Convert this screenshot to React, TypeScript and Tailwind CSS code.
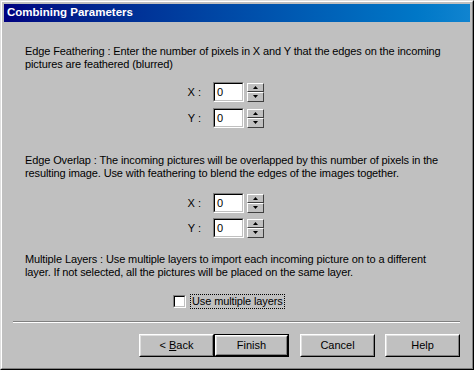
import React from "react"

const font = { fontFamily: '"Liberation Sans", Arial, sans-serif' }

function SpinField({ label }: { label: string }) {
  return (
    <div className="flex items-center h-[20px] ml-[162px]">
      <span className="w-[14px] text-right">{label}</span>
      <div className="ml-[12px] w-[31px] h-[20px] bg-white border border-t-[#808080] border-l-[#808080] border-b-white border-r-white">
        <div className="w-full h-full border border-t-black border-l-black border-b-[#c0c0c0] border-r-[#c0c0c0] pl-[2px] leading-[16px] text-black">
          0
        </div>
      </div>
      <div className="ml-[3px] flex flex-col w-[17px] h-[19px]">
        <SpinButton up />
        <SpinButton />
      </div>
    </div>
  )
}

function SpinButton({ up }: { up?: boolean }) {
  return (
    <div className="flex-1 flex items-center justify-center bg-[#c0c0c0] border border-t-white border-l-white border-b-[#404040] border-r-[#404040]">
      <svg width="5" height="3" viewBox="0 0 5 3">
        {up ? <path d="M2.5 0L5 3H0z" fill="#000" /> : <path d="M0 0H5L2.5 3z" fill="#000" />}
      </svg>
    </div>
  )
}

function Button({ children, isDefault }: { children: React.ReactNode; isDefault?: boolean }) {
  return (
    <div className={isDefault ? "w-[75px] h-[23px] border border-black" : "w-[75px] h-[23px]"}>
      <div className="w-full h-full border border-t-white border-l-white border-b-black border-r-black">
        <div className="w-full h-full flex items-center justify-center border border-t-[#dfdfdf] border-l-[#dfdfdf] border-b-[#808080] border-r-[#808080]">
          {children}
        </div>
      </div>
    </div>
  )
}

export default function App() {
  return (
    <div style={font} className="w-[474px] h-[370px] bg-[#c0c0c0] text-[11px] text-black border border-t-[#dfdfdf] border-l-[#dfdfdf] border-b-black border-r-black">
      <div className="w-full h-full border border-t-white border-l-white border-b-[#808080] border-r-[#808080] p-[2px] flex flex-col">
        {/* title bar */}
        <div className="h-[18px] bg-gradient-to-r from-[#000080] to-[#1084d0] flex items-center pl-[3px]">
          <span className="text-white font-bold text-[11.5px]">Combining Parameters</span>
        </div>

        <div className="flex flex-col pl-[21px] leading-[13px] tracking-[-0.12px]">
          <p className="mt-[23px]">
            Edge Feathering : Enter the number of pixels in X and Y that the edges on the incoming
            <br />
            pictures are feathered (blurred)
          </p>
          <div className="mt-[11px] flex flex-col gap-[6px] tracking-normal">
            <SpinField label="X :" />
            <SpinField label="Y :" />
          </div>

          <p className="mt-[26px]">
            Edge Overlap : The incoming pictures will be overlapped by this number of pixels in the
            <br />
            resulting image. Use with feathering to blend the edges of the images together.
          </p>
          <div className="mt-[13px] flex flex-col gap-[5px] tracking-normal">
            <SpinField label="X :" />
            <SpinField label="Y :" />
          </div>

          <p className="mt-[15px]">
            Multiple Layers : Use multiple layers to import each incoming picture on to a different
            <br />
            layer. If not selected, all the pictures will be placed on the same layer.
          </p>
          <div className="mt-[15px] ml-[148px] flex items-center">
            <div className="w-[13px] h-[13px] bg-white border border-t-[#808080] border-l-[#808080] border-b-white border-r-white">
              <div className="w-full h-full border border-t-black border-l-black border-b-[#c0c0c0] border-r-[#c0c0c0]" />
            </div>
            <span className="ml-[4px] px-[1px] border border-dotted border-black leading-[13px]">Use multiple layers</span>
          </div>
        </div>

        <div className="mt-[12px] ml-[9px] w-[447px] h-[2px] border-t border-t-[#808080] border-b border-b-white" />

        <div className="mt-[11px] ml-[135px] flex">
          <Button>
            &lt; <span className="underline ml-[3px]">B</span>ack
          </Button>
          <Button isDefault>Finish</Button>
          <div className="ml-[11px]">
            <Button>Cancel</Button>
          </div>
          <div className="ml-[10px]">
            <Button>Help</Button>
          </div>
        </div>
      </div>
    </div>
  )
}
